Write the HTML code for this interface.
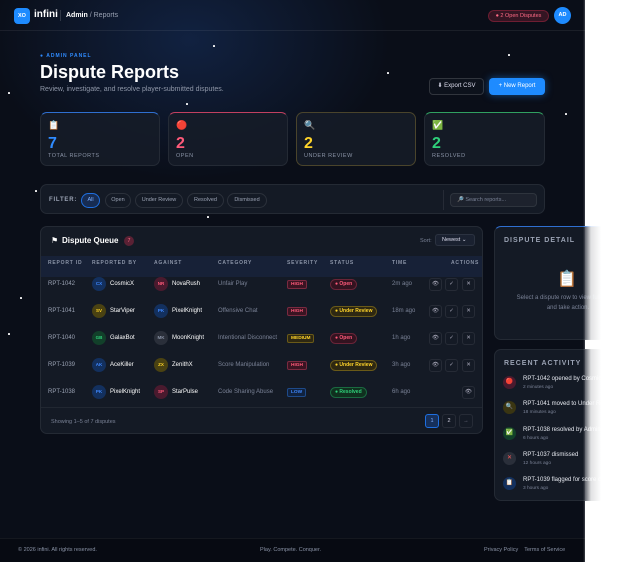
<!DOCTYPE html>
<html><head><meta charset="utf-8"><style>
*{box-sizing:border-box;margin:0;padding:0}
html{background:#fff}
body{width:640px;height:562px;position:relative;overflow:hidden;font-family:"Liberation Sans",sans-serif;color:#e6e9f0;background:#fff}
#bg{position:absolute;left:0;top:0;width:585px;height:562px;background:radial-gradient(ellipse 200px 140px at 190px 40px,rgba(30,70,140,.35),transparent),#0a0e18}
.a{position:absolute}
.card{position:absolute;background:rgba(22,28,40,.85);border:1px solid rgba(255,255,255,.07);border-radius:7px}
.star{position:absolute;width:1.5px;height:1.5px;background:#fff;border-radius:50%}
.num{position:absolute;left:7px;top:22px;font-size:16px;font-weight:bold}
.lbl{position:absolute;left:7px;top:40px;font-size:5.5px;letter-spacing:.5px;color:#8a93a6}
.ic{position:absolute;left:7px;top:7px;font-size:9px}
.pill{position:absolute;top:8px;height:15px;border-radius:8px;border:1px solid rgba(255,255,255,.1);font-size:5.5px;color:#9aa2b3;line-height:13px;text-align:center}
.row{position:absolute;left:0;width:442px;height:27px;font-size:6px}
.row span{position:absolute;top:10px}
.av{position:absolute;top:6px;width:14px;height:14px;border-radius:50%;font-size:4.5px;text-align:center;line-height:14px;font-weight:bold}
.sev{position:absolute;top:9px;height:9px;font-size:4.8px;font-weight:bold;line-height:8px;padding:0 3px;border-radius:2px;border:1px solid}
.st{position:absolute;top:8px;height:11px;font-size:5px;font-weight:bold;line-height:9px;padding:0 4px;border-radius:6px;border:1px solid}
.btn{position:absolute;top:7px;width:13px;height:13px;border:1px solid rgba(255,255,255,.08);border-radius:3px;font-size:5.5px;text-align:center;line-height:11px;color:#aab}
.th{position:absolute;top:260px;font-size:5px;letter-spacing:.8px;color:#8a93a6;font-weight:bold}
.act{position:absolute;left:8px;width:140px;height:20px}
.act .d{position:absolute;left:0;top:0;width:13px;height:13px;border-radius:50%;font-size:6px;text-align:center;line-height:13px}
.act .t1{position:absolute;left:20px;top:0;font-size:6px;color:#e6e9f0;white-space:nowrap}
.act .t2{position:absolute;left:20px;top:9px;font-size:4.8px;color:#7a8296}
</style></head><body>
<div id="bg"></div>
<div class="star" style="left:8px;top:92px"></div><div class="star" style="left:20px;top:297px"></div><div class="star" style="left:186px;top:103px"></div><div class="star" style="left:387px;top:72px"></div><div class="star" style="left:565px;top:113px"></div><div class="star" style="left:207px;top:216px"></div><div class="star" style="left:35px;top:190px"></div><div class="star" style="left:213px;top:45px"></div><div class="star" style="left:508px;top:54px"></div><div class="star" style="left:8px;top:333px"></div>
<!-- nav -->
<div class="a" style="left:0;top:30px;width:585px;height:1px;background:rgba(255,255,255,.07)"></div>
<div class="a" style="left:14px;top:8px;width:16px;height:16px;border-radius:4px;background:#1e8bff;font-size:5.5px;font-weight:bold;text-align:center;line-height:16px;color:#fff">XO</div>
<div class="a" style="left:34px;top:9px;font-size:10px;font-weight:bold;color:#fff">infini</div>
<div class="a" style="left:60px;top:10px;width:1px;height:11px;background:rgba(255,255,255,.15)"></div>
<div class="a" style="left:66px;top:12px;font-size:7px;color:#9aa2b3"><b style="color:#fff">Admin</b> / Reports</div>
<div class="a" style="left:488px;top:10px;width:61px;height:12px;border-radius:6px;background:rgba(220,50,80,.2);border:1px solid rgba(220,50,80,.35);font-size:5.5px;color:#ff6b86;line-height:10px;text-align:center">● 2 Open Disputes</div>
<div class="a" style="left:554px;top:7px;width:17px;height:17px;border-radius:50%;background:#1e8bff;font-size:5.5px;font-weight:bold;color:#fff;text-align:center;line-height:17px">AD</div>
<!-- header -->
<div class="a" style="left:40px;top:53px;font-size:5px;letter-spacing:1px;color:#2f8bff;font-weight:bold">● ADMIN PANEL</div>
<div class="a" style="left:40px;top:62px;font-size:18px;font-weight:bold;color:#fff">Dispute Reports</div>
<div class="a" style="left:40px;top:86px;font-size:7px;color:#8f97a8">Review, investigate, and resolve player-submitted disputes.</div>
<div class="a" style="left:429px;top:78px;width:55px;height:17px;border:1px solid rgba(255,255,255,.15);border-radius:4px;font-size:6px;color:#dde;text-align:center;line-height:15px;background:#0d121c">⬇ Export CSV</div>
<div class="a" style="left:489px;top:78px;width:56px;height:17px;border-radius:4px;background:#1e8bff;font-size:6px;color:#fff;text-align:center;line-height:17px;box-shadow:0 0 8px rgba(30,139,255,.5)">+ New Report</div>
<!-- stats -->
<div class="card" style="left:40px;top:112px;width:120px;height:54px;border-top:1px solid #2f6fd0"><div class="ic">📋</div><div class="num" style="color:#2f8bff">7</div><div class="lbl">TOTAL REPORTS</div></div>
<div class="card" style="left:168px;top:112px;width:120px;height:54px;border-top:1px solid #c24060"><div class="ic">🔴</div><div class="num" style="color:#ff5a7a">2</div><div class="lbl">OPEN</div></div>
<div class="card" style="left:296px;top:112px;width:120px;height:54px;border:1px solid rgba(200,170,60,.3)"><div class="ic">🔍</div><div class="num" style="color:#ffd42a">2</div><div class="lbl">UNDER REVIEW</div></div>
<div class="card" style="left:424px;top:112px;width:121px;height:54px;border-top:1px solid #30a060"><div class="ic">✅</div><div class="num" style="color:#2fd07a">2</div><div class="lbl">RESOLVED</div></div>
<!-- filter -->
<div class="card" style="left:40px;top:184px;width:505px;height:30px">
<div class="a" style="left:8px;top:12px;font-size:6px;font-weight:bold;letter-spacing:.8px;color:#9aa2b3">FILTER:</div>
<div class="pill" style="left:40px;width:19px;background:rgba(30,100,220,.25);border-color:#1e6fe0;color:#7fb0ff">All</div>
<div class="pill" style="left:64px;width:26px">Open</div>
<div class="pill" style="left:94px;width:48px">Under Review</div>
<div class="pill" style="left:146px;width:37px">Resolved</div>
<div class="pill" style="left:186px;width:40px">Dismissed</div>
<div class="a" style="left:402px;top:5px;width:1px;height:20px;background:rgba(255,255,255,.08)"></div>
<div class="a" style="left:409px;top:8px;width:87px;height:14px;border-radius:4px;background:rgba(255,255,255,.04);border:1px solid rgba(255,255,255,.08);font-size:5.5px;color:#7a8296;line-height:12px;padding-left:6px">🔎 Search reports...</div>
</div>
<!-- table -->
<div class="card" style="left:40px;top:226px;width:443px;height:208px;overflow:hidden">
<div class="a" style="left:10px;top:9px;font-size:8px;color:#fff">⚑</div>
<div class="a" style="left:21px;top:9px;font-size:8px;font-weight:bold;color:#fff">Dispute Queue</div>
<div class="a" style="left:78px;top:9px;width:10px;height:10px;border-radius:50%;background:rgba(220,50,80,.35);font-size:5px;color:#ff6b86;text-align:center;line-height:10px;left:83px">7</div>
<div class="a" style="left:379px;top:11px;font-size:5.5px;color:#7a8296">Sort:</div>
<div class="a" style="left:394px;top:7px;width:40px;height:12px;border-radius:3px;background:#1a2130;border:1px solid rgba(255,255,255,.08);font-size:5.5px;color:#dde;line-height:10px;padding-left:6px">Newest ⌄</div>
<div class="a" style="left:0;top:29px;width:443px;height:21px;background:rgba(30,50,90,.35)"></div>
<div class="a" style="left:0;top:180px;width:443px;height:1px;background:rgba(255,255,255,.06)"></div>
<div class="a" style="left:10px;top:192px;font-size:5.5px;color:#7a8296">Showing 1–5 of 7 disputes</div>
<div class="a" style="left:384px;top:187px;width:14px;height:14px;border-radius:3px;border:1px solid #1e6fe0;background:rgba(30,100,220,.3);font-size:5.5px;color:#7fb0ff;text-align:center;line-height:12px">1</div>
<div class="a" style="left:401px;top:187px;width:14px;height:14px;border-radius:3px;border:1px solid rgba(255,255,255,.08);font-size:5.5px;color:#ccd;text-align:center;line-height:12px">2</div>
<div class="a" style="left:418px;top:187px;width:14px;height:14px;border-radius:3px;border:1px solid rgba(255,255,255,.08);font-size:5.5px;color:#778;text-align:center;line-height:12px">→</div>
</div>
<div class="th" style="left:48px">REPORT ID</div><div class="th" style="left:92px">REPORTED BY</div><div class="th" style="left:154px">AGAINST</div><div class="th" style="left:218px">CATEGORY</div><div class="th" style="left:287px">SEVERITY</div><div class="th" style="left:330px">STATUS</div><div class="th" style="left:392px">TIME</div><div class="th" style="left:451px">ACTIONS</div>

<div class="row" style="left:40px;top:271px">
<span style="left:8px;color:#9aa2b3">RPT-1042</span>
<div class="av" style="left:52px;background:#13305e;color:#3f88ff">CX</div><span style="left:70px;color:#fff">CosmicX</span>
<div class="av" style="left:114px;background:#4a1a2e;color:#ff5a7a">NR</div><span style="left:132px;color:#fff">NovaRush</span>
<span style="left:178px;color:#7a8296">Unfair Play</span>
<div class="sev" style="left:247px;color:#ff5a7a;border-color:#7a2a40;background:#3a1422">HIGH</div>
<div class="st" style="left:290px;color:#ff5a7a;border-color:#6a2438;background:#331320">● Open</div>
<span style="left:352px;color:#7a8296">2m ago</span>
<div class="btn" style="left:389px">👁</div><div class="btn" style="left:405px">✓</div><div class="btn" style="left:422px">✕</div></div>

<div class="row" style="left:40px;top:298px">
<span style="left:8px;color:#9aa2b3">RPT-1041</span>
<div class="av" style="left:52px;background:#4a4212;color:#ffd42a">SV</div><span style="left:70px;color:#fff">StarViper</span>
<div class="av" style="left:114px;background:#13305e;color:#3f88ff">PK</div><span style="left:132px;color:#fff">PixelKnight</span>
<span style="left:178px;color:#7a8296">Offensive Chat</span>
<div class="sev" style="left:247px;color:#ff5a7a;border-color:#7a2a40;background:#3a1422">HIGH</div>
<div class="st" style="left:290px;color:#ffd42a;border-color:#6a5a18;background:#2e2812">● Under Review</div>
<span style="left:352px;color:#7a8296">18m ago</span>
<div class="btn" style="left:389px">👁</div><div class="btn" style="left:405px">✓</div><div class="btn" style="left:422px">✕</div></div>

<div class="row" style="left:40px;top:325px">
<span style="left:8px;color:#9aa2b3">RPT-1040</span>
<div class="av" style="left:52px;background:#12402a;color:#2fd07a">GB</div><span style="left:70px;color:#fff">GalaxBot</span>
<div class="av" style="left:114px;background:#2a2f3a;color:#8a93a6">MK</div><span style="left:132px;color:#fff">MoonKnight</span>
<span style="left:178px;color:#7a8296">Intentional Disconnect</span>
<div class="sev" style="left:247px;color:#ffd42a;border-color:#6a5a18;background:#2e2812">MEDIUM</div>
<div class="st" style="left:290px;color:#ff5a7a;border-color:#6a2438;background:#331320">● Open</div>
<span style="left:352px;color:#7a8296">1h ago</span>
<div class="btn" style="left:389px">👁</div><div class="btn" style="left:405px">✓</div><div class="btn" style="left:422px">✕</div></div>

<div class="row" style="left:40px;top:352px">
<span style="left:8px;color:#9aa2b3">RPT-1039</span>
<div class="av" style="left:52px;background:#13305e;color:#3f88ff">AK</div><span style="left:70px;color:#fff">AceKiller</span>
<div class="av" style="left:114px;background:#4a4212;color:#ffd42a">ZX</div><span style="left:132px;color:#fff">ZenithX</span>
<span style="left:178px;color:#7a8296">Score Manipulation</span>
<div class="sev" style="left:247px;color:#ff5a7a;border-color:#7a2a40;background:#3a1422">HIGH</div>
<div class="st" style="left:290px;color:#ffd42a;border-color:#6a5a18;background:#2e2812">● Under Review</div>
<span style="left:352px;color:#7a8296">3h ago</span>
<div class="btn" style="left:389px">👁</div><div class="btn" style="left:405px">✓</div><div class="btn" style="left:422px">✕</div></div>

<div class="row" style="left:40px;top:379px">
<span style="left:8px;color:#9aa2b3">RPT-1038</span>
<div class="av" style="left:52px;background:#13305e;color:#3f88ff">PK</div><span style="left:70px;color:#fff">PixelKnight</span>
<div class="av" style="left:114px;background:#4a1a2e;color:#ff5a7a">SP</div><span style="left:132px;color:#fff">StarPulse</span>
<span style="left:178px;color:#7a8296">Code Sharing Abuse</span>
<div class="sev" style="left:247px;color:#3f88ff;border-color:#1e4a8a;background:#10223f">LOW</div>
<div class="st" style="left:290px;color:#2fd07a;border-color:#1a6a40;background:#10301f">● Resolved</div>
<span style="left:352px;color:#7a8296">6h ago</span>
<div class="btn" style="left:422px">👁</div></div>

<!-- right panels -->
<div class="card" style="left:494px;top:226px;width:146px;height:114px;border-top:1px solid #2f6fd0">
<div class="a" style="left:9px;top:10px;font-size:7px;font-weight:bold;letter-spacing:1px;color:#9aa2b3">DISPUTE DETAIL</div>
<div class="a" style="left:62px;top:42px;font-size:16px">📋</div>
<div class="a" style="left:0;top:66px;width:146px;text-align:center;font-size:6px;line-height:10px;color:#7a8296">Select a dispute row to view full details<br>and take action.</div>
</div>
<div class="card" style="left:494px;top:349px;width:146px;height:152px">
<div class="a" style="left:9px;top:10px;font-size:7px;font-weight:bold;letter-spacing:1px;color:#9aa2b3">RECENT ACTIVITY</div>
<div class="act" style="top:26px"><div class="d" style="background:#4a1a2e">🔴</div><div class="t1">RPT-1042 opened by CosmicX</div><div class="t2">2 minutes ago</div></div>
<div class="act" style="top:51px"><div class="d" style="background:#3a3512">🔍</div><div class="t1">RPT-1041 moved to Under Review</div><div class="t2">18 minutes ago</div></div>
<div class="act" style="top:77px"><div class="d" style="background:#12402a">✅</div><div class="t1">RPT-1038 resolved by Admin</div><div class="t2">6 hours ago</div></div>
<div class="act" style="top:102px"><div class="d" style="background:#2a2f3a;color:#ff5a5a">✕</div><div class="t1">RPT-1037 dismissed</div><div class="t2">12 hours ago</div></div>
<div class="act" style="top:127px"><div class="d" style="background:#13305e">📋</div><div class="t1">RPT-1039 flagged for score check</div><div class="t2">3 hours ago</div></div>
</div>
<div class="a" style="left:583px;top:0;width:57px;height:562px;background:linear-gradient(90deg,rgba(255,255,255,0) 0,rgba(255,255,255,.85) 8px,#fff 18px);z-index:5"></div>
<!-- footer -->
<div class="a" style="left:0;top:538px;width:585px;height:24px;background:#070a12;border-top:1px solid rgba(255,255,255,.06)"></div>
<div class="a" style="left:18px;top:547px;font-size:5.5px;color:#8a93a6">© 2026 infini. All rights reserved.</div>
<div class="a" style="left:260px;top:547px;font-size:5.5px;color:#8a93a6">Play. Compete. Conquer.</div>
<div class="a" style="left:484px;top:547px;font-size:5.5px;color:#8a93a6">Privacy Policy &nbsp;&nbsp; Terms of Service</div>
</body></html>
